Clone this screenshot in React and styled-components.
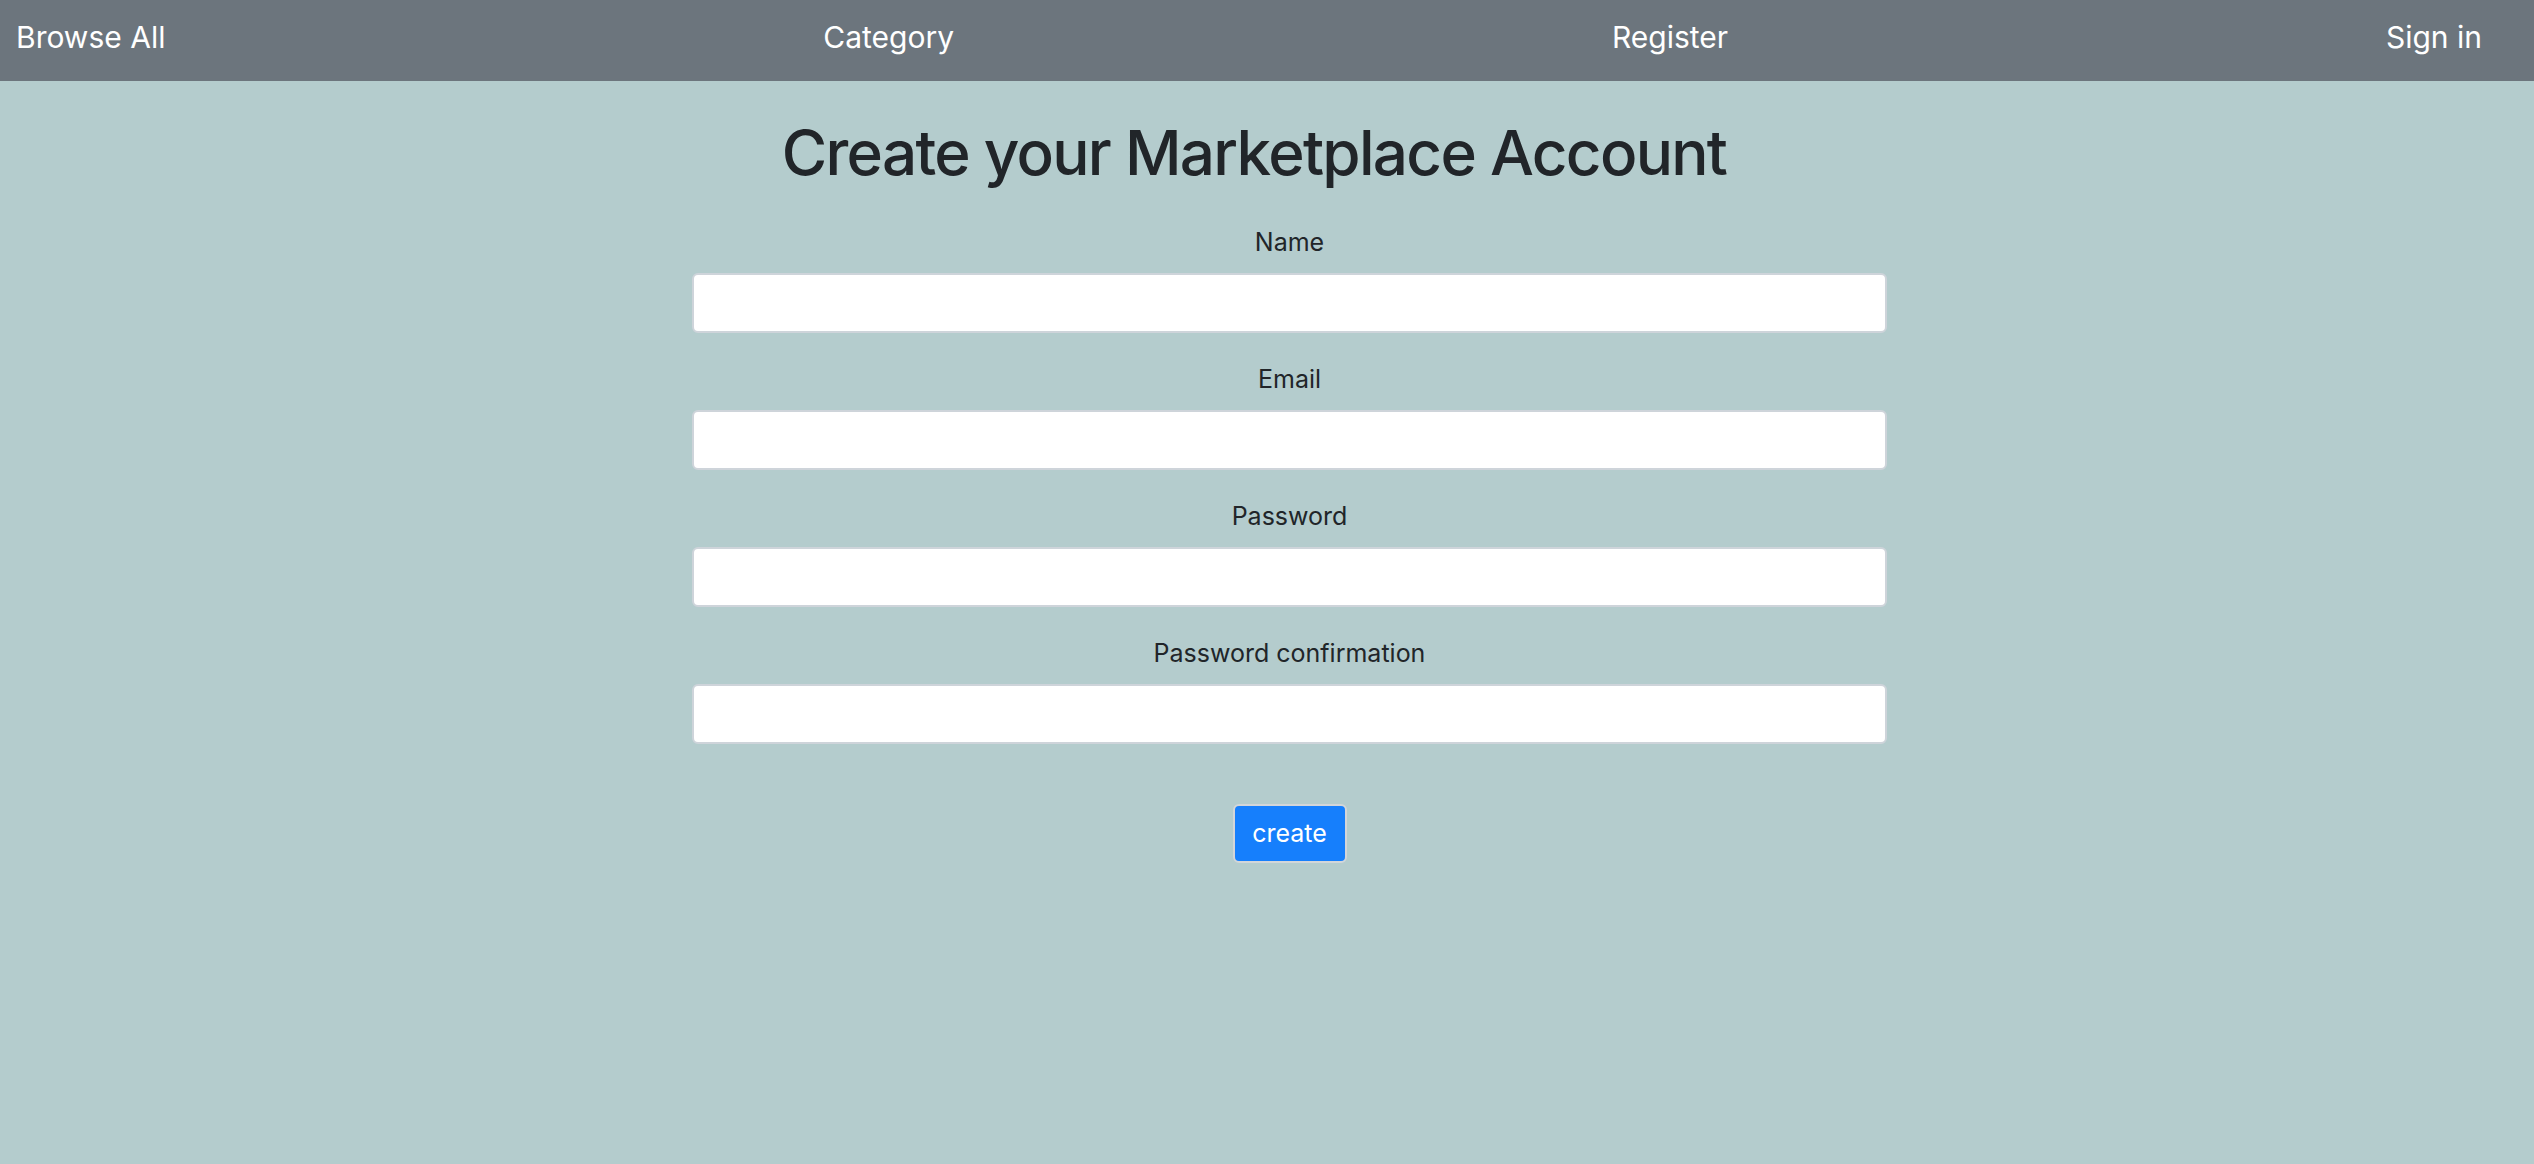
import React, { useState } from 'react';
import styled, { createGlobalStyle } from 'styled-components';

const colors = {
  page: '#b4cccd',
  nav: '#6c757d',
  text: '#212529',
  border: '#ced4da',
  primary: '#167ffc',
};

const GlobalStyle = createGlobalStyle`
  html, body {
    margin: 0;
    padding: 0;
    background: ${colors.page};
    min-height: 100vh;
  }
  body {
    font-family: Inter, "Liberation Sans", sans-serif;
    color: ${colors.text};
  }
  * {
    box-sizing: border-box;
  }
`;

const Nav = styled.nav`
  display: flex;
  justify-content: space-between;
  align-items: flex-start;
  height: 81px;
  padding: 15px 52px 0 16px;
  background: ${colors.nav};
`;

const NavLink = styled.a`
  color: #fff;
  font-size: 30px;
  line-height: 45px;
  text-decoration: none;
  cursor: pointer;
`;

const Main = styled.main`
  display: flex;
  flex-direction: column;
  align-items: center;
  padding-top: 34px;
`;

const Title = styled.h1`
  margin: 0 26px 32px 0;
  font-size: 62px;
  font-weight: 500;
  line-height: 1.24;
  letter-spacing: -1.7px;
`;

const Form = styled.form`
  display: flex;
  flex-direction: column;
  align-items: center;
  width: 1195px;
  margin-left: 45px;
`;

const Field = styled.div`
  display: flex;
  flex-direction: column;
  align-items: center;
  width: 100%;
  margin-bottom: ${props => (props.last ? '60px' : '28px')};
`;

const Label = styled.label`
  font-size: 25px;
  line-height: 36px;
  margin-bottom: 13px;
`;

const Input = styled.input`
  width: 100%;
  height: 60px;
  padding: 0 18px;
  font-size: 26px;
  font-family: inherit;
  background: #fff;
  border: 2px solid ${colors.border};
  border-radius: 6px;
  outline: none;
`;

const Button = styled.button`
  width: 114px;
  height: 59px;
  padding: 0;
  font-family: inherit;
  font-size: 25px;
  color: #fff;
  background: ${colors.primary};
  border: 2px solid #d3d6d9;
  border-radius: 6px;
  cursor: pointer;
`;

const fields = [
  { name: 'name', label: 'Name', type: 'text' },
  { name: 'email', label: 'Email', type: 'email' },
  { name: 'password', label: 'Password', type: 'password' },
  { name: 'password_confirmation', label: 'Password confirmation', type: 'password' },
];

const App = () => {
  const [values, setValues] = useState({});

  const handleChange = e => setValues({ ...values, [e.target.name]: e.target.value });

  return (
    <React.Fragment>
      <GlobalStyle />
      <Nav>
        <NavLink>Browse All</NavLink>
        <NavLink>Category</NavLink>
        <NavLink>Register</NavLink>
        <NavLink>Sign in</NavLink>
      </Nav>
      <Main>
        <Title>Create your Marketplace Account</Title>
        <Form onSubmit={e => e.preventDefault()}>
          {fields.map((f, i) => (
            <Field key={f.name} last={i === fields.length - 1}>
              <Label htmlFor={f.name}>{f.label}</Label>
              <Input
                id={f.name}
                name={f.name}
                type={f.type}
                value={values[f.name] || ''}
                onChange={handleChange}
              />
            </Field>
          ))}
          <Button type="submit">create</Button>
        </Form>
      </Main>
    </React.Fragment>
  );
};

export default App;
